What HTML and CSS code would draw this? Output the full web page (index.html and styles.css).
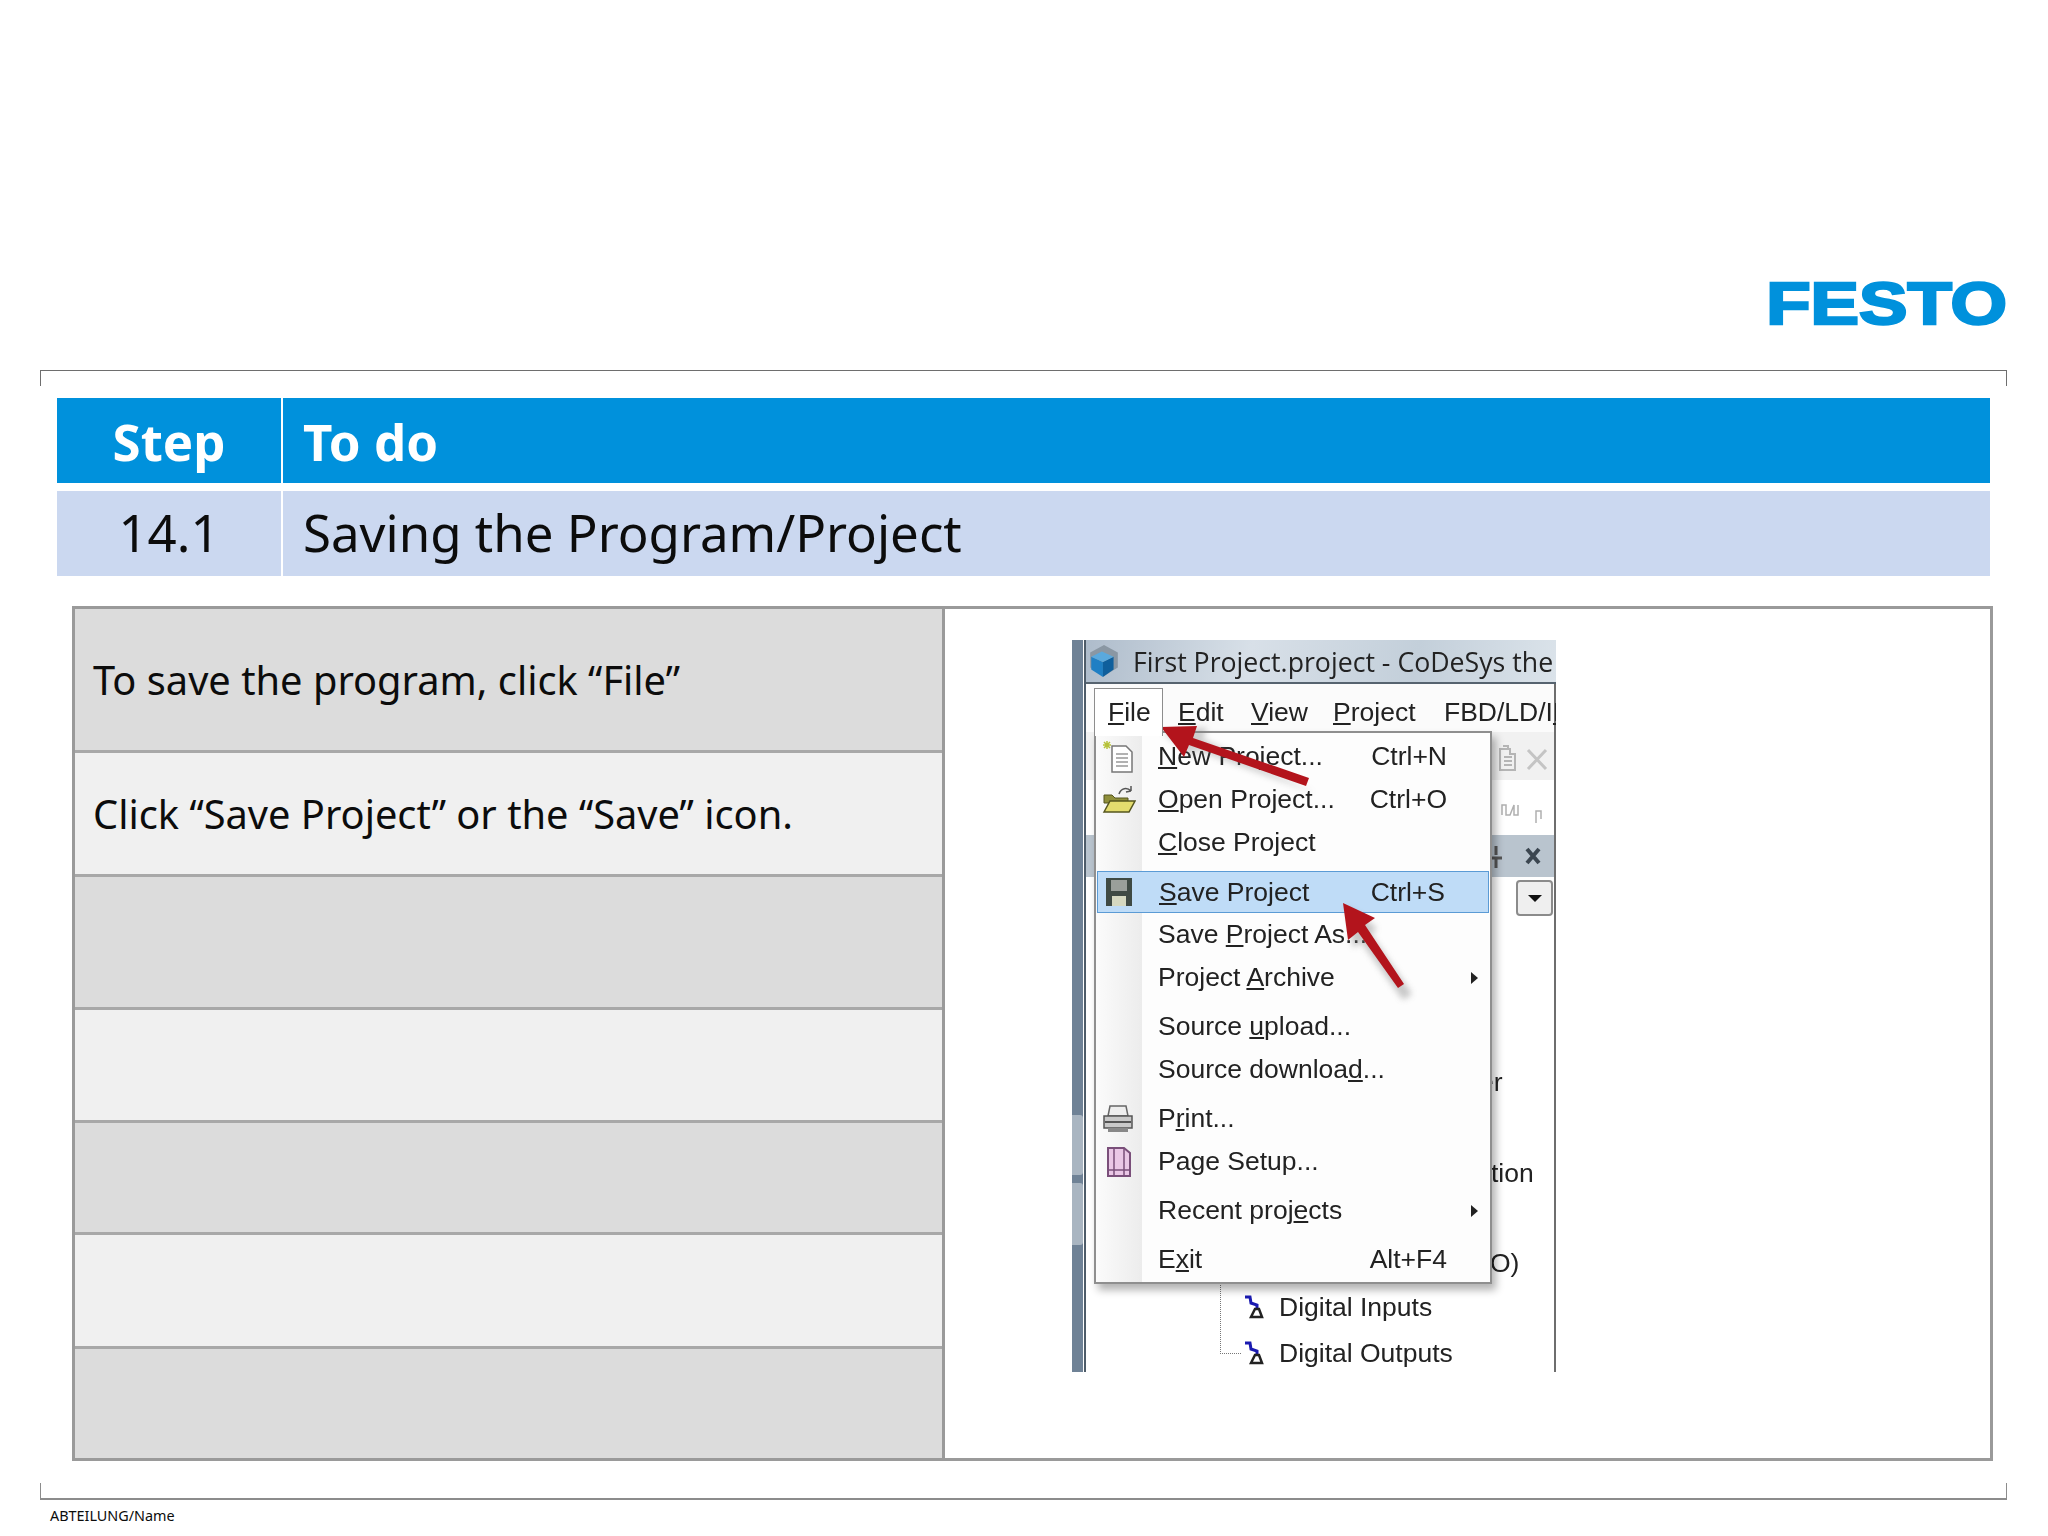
FILE: index.html
```html
<!DOCTYPE html>

<html>
    <head>
        <meta charset="utf-8">

        <link rel="stylesheet" href="styles.css">
    </head>

    <body>
        <div class="head">
            <div class="logo">FESTO</div>
        </div>

        <div class="frame_top"></div>

        <div class="steps">
            <div class="cell_blue cell_num">Step</div>
            <div class="cell_blue">To do</div>
            <div class="cell_light cell_num">14.1</div>
            <div class="cell_light">Saving the Program/Project</div>
        </div>

        <div class="content">
            <div class="list">
                <div class="row row_dark">To save the program, click “File”</div>
                <div class="row row_pale">Click “Save Project” or the “Save” icon.</div>
                <div class="row row_dark"></div>
                <div class="row row_pale"></div>
                <div class="row row_dark"></div>
                <div class="row row_pale"></div>
                <div class="row row_dark"></div>
            </div>

            <div class="picture">
                <div class="shot">
                    <div class="side"></div>
                    <div class="side_btn side_btn1"></div>
                    <div class="side_btn side_btn2"></div>
                    <div class="edge_left"></div>
                    <div class="edge_right"></div>

                    <div class="title">
                        <svg width="32" height="34" viewBox="0 0 30 32">
                            <path d="M15 1 L28 8 L28 22 L15 30 L2 22 L2 8 Z" fill="#8a97a3"/>
                            <path d="M3 12 L14 17 L14 31 L3 24 Z" fill="#1f7fc4"/>
                            <path d="M14 17 L24 12 L24 24 L14 31 Z" fill="#0f5f9c"/>
                            <path d="M3 12 L13 7 L24 12 L14 17 Z" fill="#5aa9dd"/>
                        </svg>
                        <span>First Project.project - CoDeSys the</span>
                    </div>

                    <div class="menubar">
                        <span class="file_tab"><u>F</u>ile</span>
                        <span class="bar_item bar_edit"><u>E</u>dit</span>
                        <span class="bar_item bar_view"><u>V</u>iew</span>
                        <span class="bar_item bar_project"><u>P</u>roject</span>
                        <span class="bar_item bar_fbd">FBD/LD/I<u>L</u></span>
                    </div>

                    <div class="tool_band"></div>
                    <div class="panel_band"></div>

                    <svg class="tool_icons" width="60" height="100" viewBox="0 0 60 100">
                        <path d="M4 5 H14 V10 H19 V26 H4 Z M8 13 H16 M8 17 H16 M8 21 H16 M7 2 H12 V6" fill="none" stroke="#b5b5b5" stroke-width="2"/>
                        <path d="M32 6 L50 25 M50 6 L32 25" stroke="#c4c4c4" stroke-width="3"/>
                        <path d="M6 71 V61 H10 V71 H14 L18 61 V71 H22 V61 M40 79 V67 H45 V75" fill="none" stroke="#b0b0b0" stroke-width="1.5"/>
                    </svg>

                    <svg class="panel_icons" width="74" height="30" viewBox="0 0 74 30">
                        <path d="M9 17 H20 M14 5 V14 M14 17 V27" stroke="#555" stroke-width="3"/>
                        <path d="M45 8 L57 22 M57 8 L45 22" stroke="#3b4650" stroke-width="4"/>
                    </svg>

                    <div class="drop"><i></i></div>

                    <span class="behind behind_er">er</span>
                    <span class="behind behind_tion">tion</span>
                    <span class="behind behind_o">O)</span>

                    <div class="tree">
                        <div class="tree_line"></div>
                        <div class="tree_row tree_row1">
                            <svg width="24" height="26" viewBox="0 0 24 26">
                                <path d="M4 2 L9 2 L10 8 L16 10 L16 14" fill="none" stroke="#1a1ab0" stroke-width="3"/>
                                <path d="M10 22 L14 14 L18 14 L21 22 Z" fill="#fff" stroke="#222" stroke-width="2.5"/>
                            </svg>
                            <span>Digital Inputs</span>
                        </div>
                        <div class="tree_row tree_row2">
                            <svg width="24" height="26" viewBox="0 0 24 26">
                                <path d="M4 2 L9 2 L10 8 L16 10 L16 14" fill="none" stroke="#1a1ab0" stroke-width="3"/>
                                <path d="M10 22 L14 14 L18 14 L21 22 Z" fill="#fff" stroke="#222" stroke-width="2.5"/>
                            </svg>
                            <span>Digital Outputs</span>
                        </div>
                    </div>

                    <div class="menu">
                        <div class="gutter"></div>

                        <div class="item">
                            <svg class="icon" width="34" height="34" viewBox="0 0 34 34">
                                <path d="M10 6 H24 L30 12 V32 H10 Z" fill="#fff" stroke="#777" stroke-width="1.5"/>
                                <path d="M14 14 H26 M14 18 H26 M14 22 H26 M14 26 H26" stroke="#999" stroke-width="1.5"/>
                                <path d="M5 1 V9 M1 5 H9 M2 2 L8 8 M8 2 L2 8" stroke="#b6c23a" stroke-width="1.5"/>
                            </svg>
                            <span><u>N</u>ew Project...</span>
                            <em>Ctrl+N</em>
                        </div>
                        <div class="item">
                            <svg class="icon" width="34" height="30" viewBox="0 0 34 30">
                                <path d="M2 10 H10 L13 13 H26 V18 H2 Z" fill="#8f8f3a" stroke="#55551e"/>
                                <path d="M2 27 L8 16 H33 L27 27 Z" fill="#e3dc6e" stroke="#55551e" stroke-width="1.5"/>
                                <path d="M17 9 C19 3 25 2 29 6 M29 6 L29 1 M29 6 L24 7" fill="none" stroke="#555" stroke-width="1.5"/>
                            </svg>
                            <span><u>O</u>pen Project...</span>
                            <em>Ctrl+O</em>
                        </div>
                        <div class="item"><span><u>C</u>lose Project</span></div>
                        <div class="gap gap_save"></div>
                        <div class="item item_on">
                            <svg class="icon icon_save" width="26" height="28" viewBox="0 0 26 28">
                                <rect x="0" y="0" width="26" height="28" fill="#3f4a44"/>
                                <rect x="5" y="2" width="16" height="11" fill="#9a9f9a"/>
                                <rect x="6" y="18" width="14" height="10" fill="#d5d8c0"/>
                            </svg>
                            <span><u>S</u>ave Project</span>
                            <em>Ctrl+S</em>
                        </div>
                        <div class="item"><span>Save <u>P</u>roject As...</span></div>
                        <div class="item">
                            <span>Project <u>A</u>rchive</span>
                            <b class="more"></b>
                        </div>
                        <div class="gap"></div>
                        <div class="item"><span>Source <u>u</u>pload...</span></div>
                        <div class="item"><span>Source downloa<u>d</u>...</span></div>
                        <div class="gap"></div>
                        <div class="item">
                            <svg class="icon" width="32" height="28" viewBox="0 0 32 28">
                                <path d="M8 1 H24 L26 11 H6 Z" fill="#eee" stroke="#666" stroke-width="1.5"/>
                                <path d="M2 11 H30 V23 H2 Z" fill="#c9c9c9" stroke="#555" stroke-width="1.5"/>
                                <path d="M3 17 H29" stroke="#555" stroke-width="2"/>
                                <path d="M6 23 H26 V27 H6 Z" fill="#888"/>
                            </svg>
                            <span>P<u>r</u>int...</span>
                        </div>
                        <div class="item">
                            <svg class="icon icon_page" width="24" height="30" viewBox="0 0 24 30">
                                <path d="M1 1 H17 L23 6 V29 H1 Z" fill="#eac7e6" stroke="#7a4f7a" stroke-width="2"/>
                                <path d="M7 1 V29 M17 1 V29 M1 23 H23" stroke="#7a4f7a" stroke-width="1.5"/>
                            </svg>
                            <span>Pa<u>g</u>e Setup...</span>
                        </div>
                        <div class="gap"></div>
                        <div class="item">
                            <span>Recent proj<u>e</u>cts</span>
                            <b class="more"></b>
                        </div>
                        <div class="gap"></div>
                        <div class="item">
                            <span>E<u>x</u>it</span>
                            <em>Alt+F4</em>
                        </div>
                    </div>

                    <svg class="arrows" width="484" height="732" viewBox="0 0 484 732">
                        <defs>
                            <filter id="soft"><feGaussianBlur stdDeviation="3"/></filter>
                        </defs>
                        <path d="M240 148 L118 104 L122 114 L88 88 L132 82 L128 94 Z" fill="#777" opacity="0.35" filter="url(#soft)" transform="translate(3 5)"/>
                        <path d="M335 350 L294 290 L300 284 L270 262 L276 304 L284 298 L326 356 Z" fill="#777" opacity="0.4" filter="url(#soft)" transform="translate(5 4)"/>
                        <path d="M234 146 L237 138 L121 98 L125 86 L89 87 L112 117 L117 105 Z" fill="#b3141c"/>
                        <path d="M326 348 L332 344 L293 285 L303 278 L271 263 L276 300 L286 292 Z" fill="#b3141c"/>
                    </svg>
                </div>
            </div>
        </div>

        <div class="frame_bottom"></div>

        <div class="foot">ABTEILUNG/Name</div>
    </body>
</html>
```

FILE: styles.css
```css
html, body
{
    margin: 0;
    padding: 0;
    background: white;
}

body
{
    width: 2048px;
    height: 1536px;
    overflow: hidden;
    font-family: "Noto Sans", sans-serif;
    color: #0c0c0c;
}

.head
{
    height: 370px;
    padding-right: 41px;
    display: flex;
    justify-content: flex-end;
    align-items: flex-start;
}

.logo
{
    margin-top: 269px;
    font-family: "Liberation Sans", sans-serif;
    font-weight: bold;
    font-size: 60px;
    line-height: 69px;
    color: #0091dc;
    -webkit-text-stroke: 2.5px #0091dc;
    transform: scaleX(1.21);
    transform-origin: right center;
}

.frame_top
{
    height: 15px;
    margin: 0 41px 0 40px;
    border: 1px solid #6e6e6e;
    border-bottom: none;
}

.frame_bottom
{
    height: 15px;
    margin: 22px 41px 0 40px;
    border: 2px solid #8c8c8c;
    border-top: none;
    border-width: 0 1px 2px 1px;
}

.steps
{
    margin: 12px 57px 0 57px;
    width: 1933px;
    display: grid;
    grid-template-columns: 224px 1fr;
    grid-template-rows: 85px 85px;
    column-gap: 2px;
    row-gap: 8px;
    font-size: 51px;
}

.cell_blue
{
    background: #0091dc;
    color: white;
    font-weight: bold;
    padding-left: 20px;
    padding-top: 1px;
    box-sizing: border-box;
    display: flex;
    align-items: center;
}

.cell_light
{
    background: #cbd8f0;
    padding-left: 20px;
    padding-bottom: 3px;
    box-sizing: border-box;
    display: flex;
    align-items: center;
}

.cell_num
{
    padding-left: 0;
    justify-content: center;
}

.content
{
    margin: 30px 0 0 72px;
    width: 1921px;
    height: 855px;
    box-sizing: border-box;
    border: 3px solid #9a9a9a;
    display: flex;
}

.list
{
    width: 867px;
    border-right: 3px solid #9a9a9a;
    display: grid;
    grid-template-rows: 144px 124px 133px 113px 112px 114px 1fr;
    font-size: 39.8px;
}

.row
{
    padding-left: 18px;
    display: flex;
    align-items: center;
    border-bottom: 3px solid #a8a8a8;
}

.row:last-child
{
    border-bottom: none;
}

.row_dark
{
    background: #dcdcdc;
}

.row_pale
{
    background: #f0f0f0;
}

.picture
{
    flex: 1;
    padding: 31px 0 0 127px;
}

.shot
{
    position: relative;
    width: 484px;
    height: 732px;
    overflow: hidden;
    background: white;
    font-family: "Liberation Sans", sans-serif;
    font-size: 26.5px;
    color: #222;
    filter: blur(0.4px);
}

.side
{
    position: absolute;
    left: 0;
    top: 0;
    width: 11px;
    height: 732px;
    background: #6f8296;
}

.side_btn
{
    position: absolute;
    left: 0;
    width: 11px;
    background: #a9b5c1;
    border-radius: 0 3px 3px 0;
}

.side_btn1
{
    top: 475px;
    height: 60px;
}

.side_btn2
{
    top: 543px;
    height: 62px;
}

.edge_left
{
    position: absolute;
    left: 12px;
    top: 0;
    width: 2px;
    height: 732px;
    background: #4e5c69;
}

.edge_right
{
    position: absolute;
    right: 0;
    top: 40px;
    width: 2px;
    height: 692px;
    background: #6e6e6e;
}

.title
{
    position: absolute;
    left: 14px;
    top: 0;
    right: 0;
    height: 44px;
    padding-left: 2px;
    box-sizing: border-box;
    display: flex;
    align-items: center;
    gap: 13px;
    background: linear-gradient(100deg, #aebccb, #d8e0e8 35%, #c3cfda 70%, #dbe3ea);
    border-bottom: 2px solid #56636f;
    font-family: "Open Sans", sans-serif;
    font-size: 26.7px;
    white-space: nowrap;
}

.menubar
{
    position: absolute;
    left: 14px;
    right: 2px;
    top: 44px;
    height: 48px;
    background: #fbfbfb;
}

.file_tab
{
    position: absolute;
    left: 8px;
    top: 4px;
    width: 69px;
    height: 48px;
    padding-left: 13px;
    line-height: 46px;
    box-sizing: border-box;
    border: 1px solid #8d8d8d;
    border-bottom: none;
    background: white;
    z-index: 2;
}

.bar_item
{
    position: absolute;
    top: 13px;
    white-space: nowrap;
}

.bar_edit
{
    left: 92px;
}

.bar_view
{
    left: 165px;
}

.bar_project
{
    left: 247px;
}

.bar_fbd
{
    left: 358px;
}

.tool_band
{
    position: absolute;
    left: 14px;
    right: 2px;
    top: 92px;
    height: 48px;
    background: #f1f1f1;
}

.panel_band
{
    position: absolute;
    left: 14px;
    right: 2px;
    top: 195px;
    height: 42px;
    background: #b9c4ce;
}

.tool_icons
{
    position: absolute;
    left: 424px;
    top: 104px;
}

.panel_icons
{
    position: absolute;
    left: 410px;
    top: 201px;
}

.drop
{
    position: absolute;
    left: 444px;
    top: 240px;
    width: 37px;
    height: 36px;
    box-sizing: border-box;
    border: 2px solid #8b8b8b;
    border-radius: 4px;
    background: #efefef;
    display: flex;
    align-items: center;
    justify-content: center;
}

.drop i
{
    border-left: 7px solid transparent;
    border-right: 7px solid transparent;
    border-top: 7px solid #111;
}

.behind
{
    position: absolute;
}

.behind_er
{
    left: 407px;
    top: 427px;
}

.behind_tion
{
    left: 419px;
    top: 518px;
}

.behind_o
{
    left: 418px;
    top: 608px;
}

.tree_line
{
    position: absolute;
    left: 148px;
    top: 640px;
    width: 20px;
    height: 73px;
    border-left: 1px dotted #777;
    border-bottom: 1px dotted #777;
}

.tree_row
{
    position: absolute;
    left: 169px;
    display: flex;
    align-items: center;
    gap: 14px;
    white-space: nowrap;
}

.tree_row1
{
    top: 652px;
}

.tree_row2
{
    top: 698px;
}

.menu
{
    position: absolute;
    left: 22px;
    top: 91px;
    width: 398px;
    height: 553px;
    box-sizing: border-box;
    padding-top: 2px;
    border: 2px solid #8f8f8f;
    background: #fdfdfd;
    box-shadow: 4px 6px 8px rgba(0, 0, 0, 0.3);
}

.gutter
{
    position: absolute;
    left: 0;
    top: 0;
    bottom: 0;
    width: 46px;
    background: linear-gradient(90deg, #fbfbfb, #ececec);
}

.item
{
    position: relative;
    height: 43px;
    padding-left: 62px;
    display: flex;
    align-items: center;
    white-space: nowrap;
}

.item em
{
    position: absolute;
    right: 43px;
    font-style: normal;
}

.item_on
{
    height: 42px;
    margin: 0 1px;
    padding-left: 61px;
    box-sizing: border-box;
    border: 1px solid #5b9bd5;
    background: #bfdcf7;
}

.gap
{
    height: 6px;
}

.gap_save
{
    height: 7px;
}

.icon
{
    position: absolute;
    left: 6px;
    top: 50%;
    transform: translateY(-50%);
}

.icon_save
{
    left: 8px;
}

.icon_page
{
    left: 11px;
}

.more
{
    position: absolute;
    right: 12px;
    border-top: 6px solid transparent;
    border-bottom: 6px solid transparent;
    border-left: 7px solid #222;
}

.arrows
{
    position: absolute;
    left: 0;
    top: 0;
}

.foot
{
    margin: 6px 0 0 50px;
    font-size: 14.4px;
}
```
